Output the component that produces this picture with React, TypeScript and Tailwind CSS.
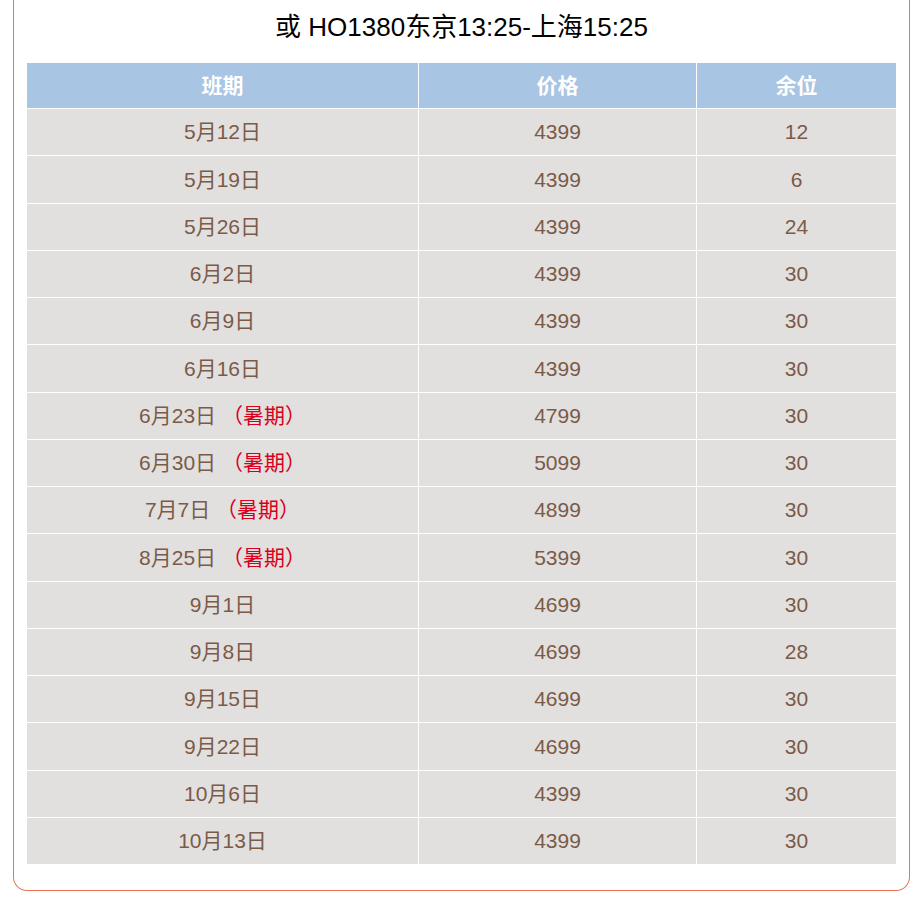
const rows: { date: string; summer?: boolean; price: string; seats: string }[] = [
  { date: '5月12日', price: '4399', seats: '12' },
  { date: '5月19日', price: '4399', seats: '6' },
  { date: '5月26日', price: '4399', seats: '24' },
  { date: '6月2日', price: '4399', seats: '30' },
  { date: '6月9日', price: '4399', seats: '30' },
  { date: '6月16日', price: '4399', seats: '30' },
  { date: '6月23日', summer: true, price: '4799', seats: '30' },
  { date: '6月30日', summer: true, price: '5099', seats: '30' },
  { date: '7月7日', summer: true, price: '4899', seats: '30' },
  { date: '8月25日', summer: true, price: '5399', seats: '30' },
  { date: '9月1日', price: '4699', seats: '30' },
  { date: '9月8日', price: '4699', seats: '28' },
  { date: '9月15日', price: '4699', seats: '30' },
  { date: '9月22日', price: '4699', seats: '30' },
  { date: '10月6日', price: '4399', seats: '30' },
  { date: '10月13日', price: '4399', seats: '30' },
];

export default function App() {
  return (
    <div
      className="min-h-[899px] bg-white"
      style={{ fontFamily: '"Liberation Sans", Arial, "Noto Sans CJK SC", sans-serif' }}
    >
      <div className="ml-[13px] w-[897px] border-x border-b border-[#e8735a] rounded-b-[14px] px-[13px] pb-[26px]">
        {/* Title */}
        <div className="h-[63px] pt-[10px] text-center text-[26px] leading-[34px] text-black">
          或 HO1380东京13:25-上海15:25
        </div>

        {/* Table */}
        <div className="grid grid-cols-[391px_277px_199px] gap-px bg-white text-[21px]">
          <div className="h-[45px] flex items-center justify-center bg-[#a8c5e3] text-white font-bold">班期</div>
          <div className="h-[45px] flex items-center justify-center bg-[#a8c5e3] text-white font-bold">价格</div>
          <div className="h-[45px] flex items-center justify-center bg-[#a8c5e3] text-white font-bold">余位</div>
          {rows.map((r) => (
            <>
              <div key={r.date + 'd'} className="h-[46.25px] flex items-center justify-center whitespace-pre bg-[#e1e0df] text-[#7b5a48]">
                {r.date}
                {r.summer && <span className="text-[#d8001c]"> （暑期）</span>}
              </div>
              <div key={r.date + 'p'} className="h-[46.25px] flex items-center justify-center bg-[#e1e0df] text-[#7b5a48]">
                {r.price}
              </div>
              <div key={r.date + 's'} className="h-[46.25px] flex items-center justify-center bg-[#e1e0df] text-[#7b5a48]">
                {r.seats}
              </div>
            </>
          ))}
        </div>
      </div>
    </div>
  );
}
